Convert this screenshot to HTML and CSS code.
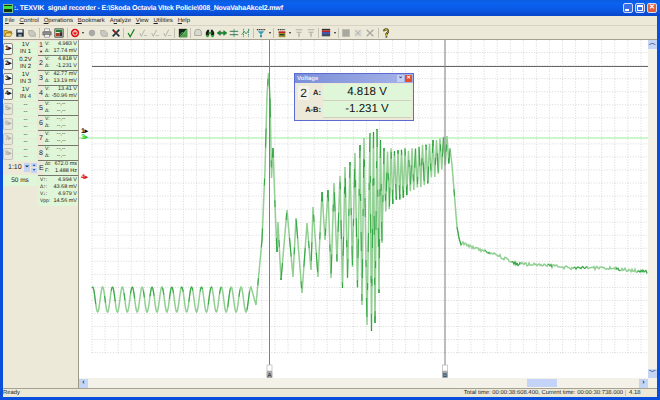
FILE: index.html
```html
<!DOCTYPE html>
<html lang="en">
<head>
  <meta charset="UTF-8" />
  <title>TEXVIK signal recorder</title>
  <link rel="stylesheet" href="styles.css">
</head>
<body>
  <svg class="defs" width="0" height="0">
    <symbol id="i-open" viewBox="0 0 12 12"><path d="M1 3h4l1 1h4v2H4L2 10H1z" fill="#e8c040" stroke="#705000" stroke-width=".7"/><path d="M2 10l2-4h7l-2 4z" fill="#f8e080" stroke="#705000" stroke-width=".7"/></symbol>
    <symbol id="i-save" viewBox="0 0 12 12"><path d="M1.5 1.5h9v9h-9z" fill="#203040"/><path d="M3 2h6v3.5H3z" fill="#e8e8e8"/><path d="M4 7.5h4v3H4z" fill="#a0a8b0"/></symbol>
    <symbol id="i-grey" viewBox="0 0 12 12"><path d="M2 3h5l3 3v4H4L2 7z" fill="#c8c8c0" stroke="#a0a098" stroke-width=".8"/></symbol>
    <symbol id="i-print" viewBox="0 0 12 12"><path d="M3 1h6v3H3z" fill="#fff" stroke="#555" stroke-width=".6"/><path d="M1 4.500h10v4H1z" fill="#909090" stroke="#444" stroke-width=".6"/><path d="M3 8h6v3H3z" fill="#fff" stroke="#555" stroke-width=".6"/></symbol>
    <symbol id="i-preview" viewBox="0 0 12 12"><path d="M1 1h10v10H1z" fill="#fff" stroke="#333"/><path d="M2 2h8v3H2z" fill="#208030"/><path d="M2 6h5v4H2z" fill="#a04020"/><path d="M7 5h3v5H7z" fill="#303030"/></symbol>
    <symbol id="i-stop" viewBox="0 0 12 12"><circle cx="6" cy="6" r="5" fill="#e01010"/><circle cx="6" cy="6" r="2.600" fill="none" stroke="#fff" stroke-width="1.100"/><path d="M6 2.500v3" stroke="#fff"/></symbol>
    <symbol id="i-dot" viewBox="0 0 12 12"><circle cx="6" cy="6" r="3.800" fill="#a8a8a4"/></symbol>
    <symbol id="i-x" viewBox="0 0 12 12"><path d="M2 2l8 8M10 2l-8 8" stroke="#203040" stroke-width="2"/><path d="M3 3l3 3" stroke="#c02010" stroke-width="2"/></symbol>
    <symbol id="i-check" viewBox="0 0 12 12"><path d="M2.500 6l2.500 4.500L10 1.500" fill="none" stroke="#108020" stroke-width="1.500"/></symbol>
    <symbol id="i-gcheck" viewBox="0 0 12 12"><path d="M2 6l2 4L8 2" fill="none" stroke="#a8b0a8" stroke-width="1.100"/><path d="M7 9h4" stroke="#b8b8b0"/></symbol>
    <symbol id="i-square" viewBox="0 0 12 12"><path d="M1 1h10v10H1z" fill="#102818"/><path d="M1 11L11 1v10z" fill="#50a050"/><path d="M2 9l3-4 2 2 3-5" fill="none" stroke="#80e080" stroke-width=".7"/></symbol>
    <symbol id="i-printgrey" viewBox="0 0 12 12"><path d="M2 5a4 3.500 0 0 1 8 0v4H2z" fill="#d8d8d0" stroke="#a0a098"/></symbol>
    <symbol id="i-bino" viewBox="0 0 12 12"><path d="M1 5l2-3h2v7H1zM7 2h2l2 3v4H7z" fill="#182018"/><path d="M4 5h4v2H4z" fill="#308030"/><circle cx="3" cy="9.500" r="1.500" fill="#20a030"/><circle cx="9" cy="9.500" r="1.500" fill="#20a030"/></symbol>
    <symbol id="i-arrows" viewBox="0 0 12 12"><path d="M0 6l4-3v2h4V3l4 3-4 3V7H4v2z" fill="#109030" stroke="#083010" stroke-width=".4"/></symbol>
    <symbol id="i-lines" viewBox="0 0 12 12"><path d="M6 1v10" stroke="#30a0b0"/><path d="M1 4h10M1 8h10" stroke="#206030"/></symbol>
    <symbol id="i-bracket" viewBox="0 0 12 12"><path d="M3 1v10M9 1v10" stroke="#308090" stroke-dasharray="2 1"/><path d="M1 8l3-4 2 3 4-5" fill="none" stroke="#209040"/></symbol>
    <symbol id="i-funnel" viewBox="0 0 12 12"><path d="M1 2h10" stroke="#303030" stroke-dasharray="1.500 .7" stroke-width="1.600"/><path d="M2 4h8L6 8z" fill="#30a0b8"/><path d="M5 8h2v3H5z" fill="#208090"/></symbol>
    <symbol id="i-book" viewBox="0 0 12 12"><path d="M2 5h8v6H2z" fill="#a09030"/><path d="M1 2h9" stroke="#303030" stroke-width="1.400" stroke-dasharray="1.500 .7"/><path d="M2 4h8v2H2z" fill="#c02020"/><path d="M3 8h6" stroke="#204030" stroke-width="1.600"/></symbol>
    <symbol id="i-gbook" viewBox="0 0 12 12"><path d="M2 2h8M3 5h6M5 8h2" stroke="#b0b0a8" stroke-width="1.300"/><path d="M6 5v6" stroke="#b0b0a8" stroke-width="1.300"/></symbol>
    <symbol id="i-stack" viewBox="0 0 12 12"><path d="M1 1h10v2H1z" fill="#303030"/><path d="M1 3h10v2H1z" fill="#c02020"/><path d="M1 5h10v2H1z" fill="#2040b0"/><path d="M1 7h10v3H1z" fill="#405060"/></symbol>
    <symbol id="i-gsquare" viewBox="0 0 12 12"><path d="M1.500 1.500h9v9h-9z" fill="#a8a8a0"/></symbol>
    <symbol id="i-gbox" viewBox="0 0 12 12"><path d="M2 2h8v8H2z" fill="#d8d8d0"/><path d="M3 3l6 6M9 3l-6 6" stroke="#b0b0a8"/></symbol>
    <symbol id="i-gcross" viewBox="0 0 12 12"><path d="M2 2l8 8M10 2l-8 8" stroke="#a8a8a0" stroke-width="1.600"/></symbol>
    <symbol id="i-help" viewBox="0 0 12 12"><path d="M3.500 4a2.500 2.500 0 1 1 4 2L6.500 7v2" fill="none" stroke="#202010" stroke-width="2.400"/><path d="M3.500 4a2.500 2.500 0 1 1 4 2L6.500 7v2" fill="none" stroke="#e8d020" stroke-width="1.200"/><path d="M5.500 10h2v1.500h-2z" fill="#202010"/></symbol>
  </svg>

  <div class="window">
    <div class="titlebar">
      <span class="app-icon"><i></i></span>
      <span class="title-text">:. TEXVIK&nbsp; signal recorder - E:\Skoda Octavia Vitek Policie\008_NovaVahaAkcel2.mwf</span>
      <span class="win-buttons">
        <span class="win-btn"><b class="min"></b></span>
        <span class="win-btn"><b class="max"></b></span>
        <span class="win-btn close">✕</span>
      </span>
    </div>

    <div class="menubar">
      <span><u>F</u>ile</span>
      <span><u>C</u>ontrol</span>
      <span><u>O</u>perations</span>
      <span><u>B</u>ookmark</span>
      <span>A<u>n</u>alyze</span>
      <span><u>V</u>iew</span>
      <span><u>U</u>tilities</span>
      <span><u>H</u>elp</span>
    </div>

    <div class="toolbar">
      <svg class="tool"><use href="#i-open"/></svg>
      <svg class="tool"><use href="#i-save"/></svg>
      <svg class="tool"><use href="#i-grey"/></svg>
      <span class="sep"></span>
      <svg class="tool"><use href="#i-print"/></svg>
      <svg class="tool"><use href="#i-preview"/></svg>
      <span class="sep"></span>
      <svg class="tool"><use href="#i-stop"/></svg>
      <span class="drop"></span>
      <svg class="tool"><use href="#i-dot"/></svg>
      <svg class="tool"><use href="#i-grey"/></svg>
      <svg class="tool"><use href="#i-x"/></svg>
      <span class="sep"></span>
      <svg class="tool"><use href="#i-check"/></svg>
      <svg class="tool"><use href="#i-gcheck"/></svg>
      <svg class="tool"><use href="#i-gcheck"/></svg>
      <svg class="tool"><use href="#i-gcheck"/></svg>
      <span class="sep"></span>
      <svg class="tool"><use href="#i-square"/></svg>
      <span class="sep"></span>
      <svg class="tool"><use href="#i-printgrey"/></svg>
      <svg class="tool"><use href="#i-bino"/></svg>
      <svg class="tool"><use href="#i-arrows"/></svg>
      <svg class="tool"><use href="#i-lines"/></svg>
      <svg class="tool"><use href="#i-bracket"/></svg>
      <span class="sep"></span>
      <svg class="tool"><use href="#i-funnel"/></svg>
      <span class="drop"></span>
      <span class="sep"></span>
      <svg class="tool"><use href="#i-book"/></svg>
      <span class="drop"></span>
      <svg class="tool"><use href="#i-gbook"/></svg>
      <svg class="tool"><use href="#i-gbook"/></svg>
      <span class="sep"></span>
      <svg class="tool"><use href="#i-stack"/></svg>
      <span class="drop"></span>
      <span class="sep"></span>
      <svg class="tool"><use href="#i-gsquare"/></svg>
      <svg class="tool"><use href="#i-gbox"/></svg>
      <svg class="tool"><use href="#i-gcross"/></svg>
      <span class="sep"></span>
      <svg class="tool"><use href="#i-help"/></svg>
    </div>

    <div class="main">
      <div class="side">
        <div class="side-left">
          <div class="chan"><span class="chan-btn">1▸</span><div class="scale"><span>1V</span><span>IN 1</span></div></div>
          <div class="chan"><span class="chan-btn">2▸</span><div class="scale"><span>0.2V</span><span>IN 2</span></div></div>
          <div class="chan"><span class="chan-btn">3▸</span><div class="scale"><span>1V</span><span>IN 3</span></div></div>
          <div class="chan"><span class="chan-btn">4▸</span><div class="scale"><span>1V</span><span>IN 4</span></div></div>
          <div class="chan off"><span class="chan-btn">5▸</span><div class="scale"><span>--</span><span>--</span></div></div>
          <div class="chan off"><span class="chan-btn">6▸</span><div class="scale"><span>--</span><span>--</span></div></div>
          <div class="chan off"><span class="chan-btn">7▸</span><div class="scale"><span>--</span><span>--</span></div></div>
          <div class="chan off"><span class="chan-btn">8▸</span><div class="scale"><span>--</span><span>--</span></div></div>
          <div class="ratio">
            <span class="ratio-val">1:10</span>
            <span class="combo">⌄</span>
            <span class="spin"><i>▴</i><i>▾</i></span>
          </div>
          <div class="timebase">50 ms</div>
        </div>
        <div class="side-right">
          <div class="read"><b>1<small>▼</small></b><div class="lines"><span><em>V:</em>4.983 V</span><span><em>Δ:</em>17.74 mV</span></div></div>
          <div class="read"><b>2</b><div class="lines"><span><em>V:</em>4.818 V</span><span><em>Δ:</em>-1.231 V</span></div></div>
          <div class="read"><b>3</b><div class="lines"><span><em>V:</em>42.77 mV</span><span><em>Δ:</em>13.19 mV</span></div></div>
          <div class="read"><b>4</b><div class="lines"><span><em>V:</em>13.41 V</span><span><em>Δ:</em>-50.96 mV</span></div></div>
          <div class="read"><b>5</b><div class="lines empty"><span><em>V:</em>--,--</span><span><em>Δ:</em>--,--</span></div></div>
          <div class="read"><b>6</b><div class="lines empty"><span><em>V:</em>--,--</span><span><em>Δ:</em>--,--</span></div></div>
          <div class="read"><b>7</b><div class="lines empty"><span><em>V:</em>--,--</span><span><em>Δ:</em>--,--</span></div></div>
          <div class="read"><b>8</b><div class="lines empty"><span><em>V:</em>--,--</span><span><em>Δ:</em>--,--</span></div></div>
          <div class="read freq"><b>E</b><div class="lines"><span><em>Δt:</em>672.0 ms</span><span><em>F:</em>1.488 Hz</span></div></div>
          <div class="stats">
            <span><em>V↑:</em>4.994 V</span>
            <span><em>Δ↑:</em>43.68 mV</span>
            <span><em>V↓:</em>4.979 V</span>
            <span><em>Vpp:</em>14.56 mV</span>
          </div>
        </div>
      </div>

      <div class="plot-wrap">
        <div class="plot-row">
          <div class="plot">
            <svg id="chart" class="chart" viewBox="79 40 569 338"></svg>
            <span class="marker m1">1▸</span>
            <span class="marker m3">3▸</span>
            <span class="marker m4">4▸</span>
            <div class="voltage">
              <div class="voltage-title">
                <span>Voltage</span>
                <span class="v-btn">⌄</span>
                <span class="v-btn v-close">✕</span>
              </div>
              <div class="voltage-body">
                <div class="v-row">
                  <div class="v-label"><span class="v-chan">2</span><b>A:</b></div>
                  <div class="v-value">4.818 V</div>
                </div>
                <div class="v-row">
                  <div class="v-label v-right"><b>A-B:</b></div>
                  <div class="v-value">-1.231 V</div>
                </div>
              </div>
            </div>
          </div>
          <div class="vscroll">
            <span class="sb-btn">︿</span>
            <span class="sb-btn">﹀</span>
          </div>
        </div>
        <div class="hscroll">
          <span class="sb-btn">‹</span>
          <span class="thumb"></span>
          <span class="sb-btn">›</span>
        </div>
      </div>
    </div>

    <div class="statusbar">
      <span class="status-msg">Ready</span>
      <span class="status-time">Total time: 00:00:38:608.400, Current time: 00:00:30:738.000</span>
      <span class="status-ver">4.18</span>
    </div>
  </div>
  <script src="script.js"></script>
</body>
</html>
```

FILE: styles.css
```css
* {
  box-sizing: border-box;
}
html, body {
  margin: 0;
  padding: 0;
  overflow: hidden;
}
.defs {
  position: absolute;
}
.window {
  width: 660px;
  height: 400px;
  display: flex;
  flex-direction: column;
  background-color: #ece9d8;
  border: 3px solid #0a4fdc;
  border-top: none;
  font-family: "Liberation Sans", Arial, sans-serif;
  font-size: 6px;
  color: #222;
  text-rendering: geometricPrecision;
}
.titlebar {
  height: 16px;
  margin: 0 -3px;
  display: flex;
  align-items: center;
  background: linear-gradient(#0b5bdc, #0a62f0 20%, #0a55e0 70%, #0846c8);
  color: white;
}
.app-icon {
  width: 10px;
  height: 9px;
  margin: 0 1px 0 3px;
  background-color: #103010;
  border: 1px solid #80c080;
}
.app-icon i {
  display: block;
  height: 3px;
  margin-top: 1px;
  background-color: #40e040;
}
.title-text {
  font-size: 7px;
  letter-spacing: -0.16px;
  font-weight: bold;
  white-space: nowrap;
  flex: 1;
}
.win-buttons {
  display: flex;
  gap: 2px;
  margin-right: 3px;
}
.win-btn {
  width: 10px;
  height: 10px;
  border: 1px solid #d0dcf8;
  border-radius: 2px;
  background-color: #3a6ee8;
  display: flex;
  justify-content: center;
  font-size: 7px;
  line-height: 8px;
  font-weight: bold;
  color: white;
}
.win-btn b.min {
  width: 4px;
  height: 2px;
  margin: 5px 3px 0 0;
  background-color: white;
}
.win-btn b.max {
  width: 6px;
  height: 6px;
  margin-top: 1px;
  border: 1px solid white;
  border-top-width: 2px;
}
.win-btn.close {
  background-color: #e0603a;
}
.menubar {
  height: 10px;
  display: flex;
  align-items: center;
  gap: 4.800px;
  padding-left: 2px;
  border-bottom: 1px solid #d6d3c4;
  white-space: nowrap;
}
.toolbar {
  height: 14px;
  display: flex;
  align-items: center;
  border-bottom: 1px solid #a5a294;
}
.tool {
  width: 10px;
  height: 10px;
  margin: 0 1px;
  flex: none;
}
.tool:first-child {
  margin-left: 0;
}
.sep {
  width: 1px;
  height: 10px;
  margin: 0 1.200px;
  background-color: #c4c1b2;
  flex: none;
}
.drop {
  width: 0;
  height: 0;
  margin: 0 1.500px;
  border: 1.500px solid transparent;
  border-top: 2px solid #222;
  border-bottom: none;
  flex: none;
}
.main {
  flex: 1;
  min-height: 0;
  display: flex;
}
.side {
  width: 76px;
  flex: none;
  display: flex;
  align-items: flex-start;
  gap: 1px;
  padding-top: 1px;
  border-right: 1px solid #9c998a;
}
.side-left {
  width: 34px;
  flex: none;
}
.chan {
  height: 15px;
  display: flex;
  align-items: center;
  gap: 1px;
}
.chan-btn {
  width: 10px;
  height: 12px;
  border: 1px solid #8a8a80;
  border-radius: 2px;
  background-color: #f6f6f0;
  font-size: 6.500px;
  line-height: 10px;
  text-align: center;
  font-weight: bold;
  color: #111;
  flex: none;
  letter-spacing: -0.5px;
}
.scale {
  flex: 1;
  display: flex;
  flex-direction: column;
  gap: 1px;
}
.scale span {
  height: 6.500px;
  line-height: 6.500px;
  text-align: center;
  background-color: #e0f6d8;
  font-size: 6px;
}
.off .chan-btn {
  color: #b0b0a6;
  border-color: #c4c4ba;
  background-color: #e8e6d8;
}
.ratio {
  height: 11px;
  margin-top: 1px;
  display: flex;
  align-items: center;
  gap: 1px;
  padding-left: 3px;
  font-size: 7px;
}
.ratio-val {
  flex: 1;
  padding-left: 2px;
}
.combo {
  width: 6px;
  height: 9px;
  background-color: #c4d4f4;
  line-height: 6px;
  text-align: center;
  color: #203070;
  font-weight: bold;
}
.spin {
  width: 6px;
  display: flex;
  flex-direction: column;
  gap: 1px;
}
.spin i {
  height: 4.500px;
  background-color: #c4d4f4;
  font-style: normal;
  font-size: 4px;
  line-height: 4.500px;
  text-align: center;
  color: #203070;
}
.timebase {
  height: 11px;
  margin-top: 2px;
  line-height: 11px;
  text-align: center;
  background-color: #e0f6d8;
  font-size: 6.500px;
}
.side-right {
  width: 40px;
  flex: none;
  background-color: #e0f6d8;
}
.read {
  height: 15px;
  display: flex;
  align-items: center;
  padding-left: 1px;
  border-bottom: 1px solid #77776c;
  background-color: #ece9d8;
}
.read b {
  width: 5px;
  font-weight: normal;
  font-size: 7px;
  line-height: 7px;
  flex: none;
}
.read small {
  display: block;
  font-size: 4px;
  line-height: 5px;
}
.lines {
  width: 34px;
  flex: none;
  background-color: #e0f6d8;
  height: 14px;
}
.lines span, .stats span {
  display: flex;
  justify-content: space-between;
  height: 7px;
  line-height: 7px;
  padding: 0 1px;
  font-size: 5.500px;
  white-space: nowrap;
}
.lines em, .stats em {
  font-style: normal;
  font-size: 5px;
}
.lines.empty span {
  justify-content: flex-start;
  gap: 7px;
}
.stats {
  padding: 1px 0 1px 1px;
}
.plot-wrap {
  flex: 1;
  min-width: 0;
  display: flex;
  flex-direction: column;
}
.plot-row {
  height: 338px;
  display: flex;
}
.plot {
  width: 569px;
  position: relative;
  background-color: white;
}
.chart {
  display: block;
  width: 569px;
  height: 338px;
}
.marker {
  position: absolute;
  left: 2px;
  font-size: 7px;
  line-height: 7px;
  font-weight: bold;
  letter-spacing: -0.3px;
}
.m1 {
  top: 88px;
  color: #111;
}
.m3 {
  top: 94px;
  color: #30d030;
}
.m4 {
  top: 134px;
  color: #e02020;
}
.voltage {
  position: absolute;
  left: 215px;
  top: 33px;
  width: 120px;
  height: 48px;
  background-color: #ece9d8;
  border: 1px solid #5a6cd0;
  display: flex;
  flex-direction: column;
}
.voltage-title {
  height: 10px;
  display: flex;
  align-items: center;
  gap: 1px;
  padding: 0 1px 0 2px;
  background: linear-gradient(90deg, #7b8ed8, #a6b4e8);
  color: #e8ecfa;
  font-size: 6px;
  font-weight: bold;
}
.voltage-title span:first-child {
  flex: 1;
}
.v-btn {
  width: 7px;
  height: 7px;
  background-color: #c4d0f0;
  color: #304080;
  font-size: 6px;
  line-height: 5px;
  text-align: center;
}
.v-close {
  background-color: #e05030;
  color: white;
  line-height: 7px;
  font-size: 5px;
}
.voltage-body {
  flex: 1;
  padding: 1px 2px 2px;
}
.v-row {
  height: 17px;
  display: flex;
}
.v-label {
  width: 26px;
  display: flex;
  align-items: center;
  justify-content: space-between;
  padding-right: 2px;
  font-size: 7.500px;
}
.v-right {
  justify-content: flex-end;
}
.v-chan {
  width: 11px;
  height: 14px;
  margin-left: 1px;
  background-color: #f4f3ea;
  font-size: 12px;
  line-height: 14px;
  text-align: center;
}
.v-value {
  flex: 1;
  background-color: #e0f6d8;
  border-bottom: 1px solid #d0cfc0;
  font-size: 11.500px;
  line-height: 16px;
  text-align: center;
  color: #111;
}
.vscroll {
  flex: 1;
  display: flex;
  flex-direction: column;
  justify-content: space-between;
  background-color: #f4f2e8;
}
.sb-btn {
  width: 9px;
  height: 9px;
  background-color: #c4d4f4;
  color: #203070;
  font-size: 7px;
  line-height: 8px;
  text-align: center;
  font-weight: bold;
  overflow: hidden;
}
.hscroll {
  height: 10px;
  display: flex;
  align-items: center;
  justify-content: space-between;
  background-color: #f4f2e8;
  padding-right: 9px;
  position: relative;
}
.thumb {
  position: absolute;
  left: 448px;
  top: 1px;
  width: 30px;
  height: 8px;
  background-color: #c4d4f8;
}
.statusbar {
  height: 9px;
  display: flex;
  align-items: center;
  border-top: 1px solid #a5a294;
  font-size: 5.900px;
  white-space: nowrap;
}
.status-msg {
  flex: 1;
}
.status-time {
  padding-right: 2px;
}
.status-ver {
  width: 32px;
  padding-left: 3px;
  border-left: 1px solid #c4c1b2;
}
```

FILE: script.js
```js
const chart = document.getElementById('chart');
const NS = 'http://www.w3.org/2000/svg';

function add(tag, attrs, parent = chart) {
  const el = document.createElementNS(NS, tag);
  for (const key in attrs) el.setAttribute(key, attrs[key]);
  parent.appendChild(el);
  return el;
}

function line(x1, y1, x2, y2, stroke, width, dash) {
  const attrs = { x1, y1, x2, y2, stroke, 'stroke-width': width };
  if (dash) attrs['stroke-dasharray'] = dash;
  return add('line', attrs);
}

// grid
for (let i = 0; i <= 42; i++) {
  const x = 92 + i * 13.07;
  line(x, 40, x, 353, '#cfcfcf', 0.8, '1 1.6');
}
for (let i = 0; i <= 23; i++) {
  const y = 52.5 + i * 13.05;
  line(92, y, 648, y, '#cfcfcf', 0.8, '1 1.6');
}

// small pseudo random so the noise stays the same on every load
let seed = 17;
function rnd() {
  seed = (seed * 16807) % 2147483647;
  return seed / 2147483647 - 0.5;
}

function lerp(table, x) {
  for (let i = 1; i < table.length; i++) {
    if (x <= table[i][0]) {
      const [x0, y0] = table[i - 1];
      const [x1, y1] = table[i];
      return y0 + (y1 - y0) * (x - x0) / (x1 - x0);
    }
  }
  return table[table.length - 1][1];
}

const pts = [];

// idle ripple
for (let x = 92; x <= 251; x += 0.5) {
  pts.push([x, 299.5 - 12.5 * Math.cos(2 * Math.PI * (x - 92.7) / 9.89)]);
}

// spike and growing oscillation, read off the picture
const swing = [
  [256, 305], [258, 283], [262, 240], [265, 170], [267, 95], [268.5, 73], [270, 95],
  [271.5, 178], [273, 148], [275, 205], [277, 252], [278, 222], [281, 280], [287, 210],
  [293, 277], [296, 218], [302, 293], [307, 223], [311, 270], [313, 207], [318, 277],
  [322, 192], [325, 240], [328, 190], [331, 278], [334, 183], [337, 262], [340, 176],
  [342.5, 288], [345, 167], [347.5, 278], [350, 162], [352.5, 267], [355, 153],
  [357.5, 288], [360, 145], [362, 305], [364, 138], [367, 325], [370, 133], [371.5, 331],
  [373.5, 132], [375, 323], [377, 129], [379, 293], [380.5, 140], [382, 243]
];
swing.forEach(p => pts.push(p));

// fast ripple riding up to the second cursor
const upper = [[384, 150], [400, 150], [420, 148], [447, 135]];
const lower = [[384, 215], [395, 200], [413, 192], [430, 180], [448, 162]];
let up = true;
for (let x = 384; x < 449; x += 1.75) {
  const y = up ? lerp(upper, x) : lerp(lower, x);
  pts.push([x, y + rnd() * 4]);
  up = !up;
}

[[450, 148], [452, 165], [454, 190], [457, 227], [459, 238], [461, 245], [463, 242]]
  .forEach(p => pts.push(p));

// slow decay with noise
const decay = [
  [463, 243], [473, 248], [497, 255], [517, 264], [540, 265], [573, 268], [607, 268], [647, 272]
];
for (let x = 464; x <= 647; x += 1) {
  pts.push([x, lerp(decay, x) + rnd() * 3.2]);
}

const pointString = pts.map(p => p[0].toFixed(1) + ',' + p[1].toFixed(1)).join(' ');

// reference lines
line(92, 66.5, 648, 66.5, '#666', 1);
line(79, 138, 648, 138, '#9aee9a', 1.2);

add('polyline', { points: pointString, fill: 'none', stroke: '#92cf93', 'stroke-width': 1.5 });
add('polyline', {
  points: pointString, fill: 'none', stroke: '#169a2c', 'stroke-width': 0.8,
  'stroke-dasharray': '19 43 7 31'
});

// cursors with their flags at the bottom
[[269.5, 'A'], [445, 'B']].forEach(([x, name]) => {
  line(x, 40, x, 365, '#808080', 1);
  add('rect', { x: x - 2.5, y: 365, width: 5, height: 6, fill: 'white', stroke: '#aaa', 'stroke-width': 0.6 });
  add('rect', { x: x - 3, y: 371, width: 6, height: 7, fill: '#aaa', rx: 1 });
  const label = add('text', {
    x, y: 377, 'text-anchor': 'middle', 'font-size': 6,
    'font-family': 'Liberation Sans', fill: '#111'
  });
  label.textContent = name;
});
```
